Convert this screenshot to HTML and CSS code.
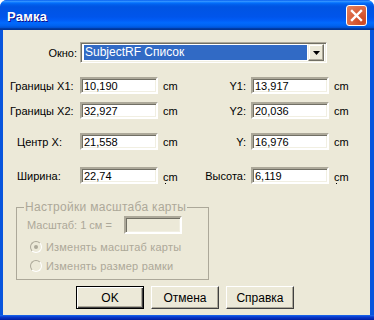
FILE: index.html
```html
<!DOCTYPE html>
<html lang="ru">
    <head>
        <title>Рамка</title>
        <meta charset="utf-8">
        <link rel="stylesheet" href="styles.css">
    </head>
    <body>
        <div class="window">
            <div class="titlebar">
                <span class="title">Рамка</span>
                <span class="close">
                    <svg width="19" height="19" viewBox="0 0 19 19">
                        <path d="M5 5 L14 14 M14 5 L5 14" stroke="#fff" stroke-width="2.4" stroke-linecap="square"/>
                    </svg>
                </span>
            </div>
            <div class="client">
                <div class="row row-select">
                    <span class="lbl lbl-okno">Окно:</span>
                    <div class="combo">
                        <span class="combo-value">SubjectRF Список</span>
                        <span class="combo-btn">
                            <svg width="7" height="4" viewBox="0 0 7 4"><polygon points="0,0 7,0 3.5,4" fill="#000"/></svg>
                        </span>
                    </div>
                </div>

                <div class="row row-x1">
                    <span class="lbl lbl-wide">Границы X1:</span>
                    <input class="edit" type="text" value="10,190">
                    <span class="cm">cm</span>
                    <span class="lbl-r">Y1:</span>
                    <input class="edit" type="text" value="13,917">
                    <span class="cm">cm</span>
                </div>

                <div class="row row-x2">
                    <span class="lbl lbl-wide">Границы X2:</span>
                    <input class="edit" type="text" value="32,927">
                    <span class="cm">cm</span>
                    <span class="lbl-r">Y2:</span>
                    <input class="edit" type="text" value="20,036">
                    <span class="cm">cm</span>
                </div>

                <div class="row row-center">
                    <span class="lbl lbl-narrow">Центр X:</span>
                    <input class="edit" type="text" value="21,558">
                    <span class="cm">cm</span>
                    <span class="lbl-r">Y:</span>
                    <input class="edit" type="text" value="16,976">
                    <span class="cm">cm</span>
                </div>

                <div class="row row-size">
                    <span class="lbl lbl-narrow">Ширина:</span>
                    <input class="edit" type="text" value="22,74">
                    <span class="cm cm-cut">cm</span>
                    <span class="lbl-r">Высота:</span>
                    <input class="edit" type="text" value="6,119">
                    <span class="cm cm-cut">cm</span>
                </div>

                <fieldset class="group" disabled>
                    <legend>Настройки масштаба карты</legend>
                    <div class="scale-row">
                        <span>Масштаб: 1 см =</span>
                        <input class="edit edit-off" type="text" value="">
                    </div>
                    <div class="radio-row radio-first">
                        <span class="radio checked"></span>
                        <span>Изменять масштаб карты</span>
                    </div>
                    <div class="radio-row">
                        <span class="radio"></span>
                        <span>Изменять размер рамки</span>
                    </div>
                </fieldset>

                <div class="buttons">
                    <button class="btn btn-default">OK</button>
                    <button class="btn">Отмена</button>
                    <button class="btn">Справка</button>
                </div>
            </div>
        </div>
    </body>
</html>
```

FILE: styles.css
```css
html, body {
  margin: 0;
  padding: 0;
  background: #fff;
}

body {
  font-family: "Liberation Sans", Arial, sans-serif;
  font-size: 11px;
  color: #000;
}

.window {
  width: 374px;
  height: 320px;
  box-sizing: border-box;
  border-radius: 7px 7px 0 0;
  padding: 0 4px 5px 3px;
  display: flex;
  flex-direction: column;
  background: linear-gradient(to bottom, #0855dd 0, #0855dd calc(100% - 5px), #1a6cf0 calc(100% - 5px), #0a3acc calc(100% - 3px), #001ea0 100%);
}

/* title bar, XP luna look */
.titlebar {
  height: 30px;
  margin: 0 -4px 0 -3px;
  padding: 0 7px 0 7px;
  border-radius: 7px 7px 0 0;
  display: flex;
  align-items: center;
  justify-content: space-between;
  background: linear-gradient(to bottom, #0058ee 0%, #3593ff 4%, #288eff 6%, #127dff 8%, #036ffc 10%, #0262ee 14%, #0057e5 20%, #0054e3 24%, #0055eb 56%, #005bf5 66%, #026afe 76%, #0062ef 86%, #0052d6 92%, #0040ab 94%, #003092 100%);
}

.title {
  color: #fff;
  font-weight: bold;
  font-size: 13px;
  letter-spacing: 0.2px;
  text-shadow: 1px 1px #0f1089;
  padding-top: 2px;
}

.close {
  width: 19px;
  height: 19px;
  margin-top: 1px;
  border: 1px solid #fff;
  border-radius: 3px;
  display: flex;
  background: radial-gradient(circle at 80% 80%, #cc4622 0%, #d75a34 35%, #e4825f 100%);
}

.client {
  flex: 1;
  background: #ece9d8;
  padding-top: 12px;
}

/* form rows */
.row {
  display: grid;
  grid-template-columns: 77px 78px 43px 50px 78px auto;
  align-items: center;
  height: 17px;
}

.row-select { height: 21px; }
.row-x1 { margin-top: 14px; }
.row-x2 { margin-top: 8px; }
.row-center { margin-top: 14px; }
.row-size { margin-top: 17px; }

.lbl-okno {
  text-align: right;
  padding-right: 3px;
}

.lbl-wide { padding-left: 7px; white-space: nowrap; }
.lbl-narrow { padding-left: 14px; }

.lbl-r {
  text-align: right;
  padding-right: 5px;
  white-space: nowrap;
}

.cm {
  padding-left: 5px;
}

.cm-cut::after {
  content: "";
  display: block;
  width: 1px;
  height: 1px;
  margin: 0 0 -4px 2px;
  background: #000;
}

.edit {
  box-sizing: border-box;
  width: 78px;
  height: 17px;
  margin: 0;
  padding: 0 2px;
  font-family: "Liberation Sans", Arial, sans-serif;
  font-size: 11px;
  color: #000;
  background: #fff;
  border: 2px solid;
  border-color: #aca899 #fff #fff #aca899;
  box-shadow: inset 1px 1px 0 #716f64, inset -1px -1px 0 #f1efe2;
  outline: none;
}

.edit-off {
  width: 58px;
  height: 18px;
  background: #ece9d8;
}

/* combo box */
.combo {
  grid-column: 2 / 6;
  width: 247px;
  height: 21px;
  box-sizing: border-box;
  display: flex;
  align-items: stretch;
  padding: 2px 2px 2px 3px;
  background: #fff;
  border: 1px solid;
  border-color: #aca899 #fff #fff #aca899;
  box-shadow: inset 1px 1px 0 #716f64, inset -1px -1px 0 #f1efe2;
}

.combo-value {
  flex: 1;
  margin-right: 1px;
  padding-left: 1px;
  background: #316ac5;
  color: #fff;
  font-size: 12px;
  line-height: 15px;
}

.combo-btn {
  width: 16px;
  box-sizing: border-box;
  display: flex;
  align-items: center;
  justify-content: center;
  margin: -1px 0;
  background: #ece9d8;
  border: 1px solid;
  border-color: #f1efe2 #716f64 #716f64 #f1efe2;
  box-shadow: inset -1px -1px 0 #aca899, inset 1px 1px 0 #fff;
}

/* group box */
.group {
  width: 193px;
  box-sizing: border-box;
  margin: 17px 0 0 13px;
  padding: 0 0 4px 7px;
  border: 1px solid #aca899;
  color: #aca899;
}

.group legend {
  padding: 0 1px;
  line-height: 13px;
  font-size: 12px;
  letter-spacing: 0.3px;
}

.scale-row {
  display: flex;
  align-items: center;
  gap: 12px;
  padding-left: 3px;
  margin-top: 2px;
}

.radio-row {
  display: flex;
  align-items: center;
  gap: 4px;
  height: 19px;
  padding-left: 6px;
  font-size: 11px;
  letter-spacing: 0.2px;
}

.radio-first { margin-top: 3px; }

.radio {
  width: 12px;
  height: 12px;
  box-sizing: border-box;
  border-radius: 50%;
  border: 1px solid;
  border-color: #aca899 #fff #fff #aca899;
  background: #ece9d8;
  display: flex;
  align-items: center;
  justify-content: center;
}

.radio.checked::after {
  content: "";
  width: 4px;
  height: 4px;
  border-radius: 50%;
  background: #aca899;
}

/* buttons */
.buttons {
  display: flex;
  gap: 7px;
  padding-left: 73px;
  margin-top: 6px;
}

.btn {
  width: 68px;
  height: 23px;
  box-sizing: border-box;
  margin: 0;
  padding: 0;
  font-family: "Liberation Sans", Arial, sans-serif;
  font-size: 12px;
  color: #000;
  background: #ece9d8;
  border: 1px solid;
  border-color: #fff #404040 #404040 #fff;
  box-shadow: inset -1px -1px 0 #aca899;
}

.btn-default {
  border: 1px solid #000;
  box-shadow: inset 1px 1px 0 #fff, inset -1px -1px 0 #404040, inset -2px -2px 0 #aca899;
}
```
